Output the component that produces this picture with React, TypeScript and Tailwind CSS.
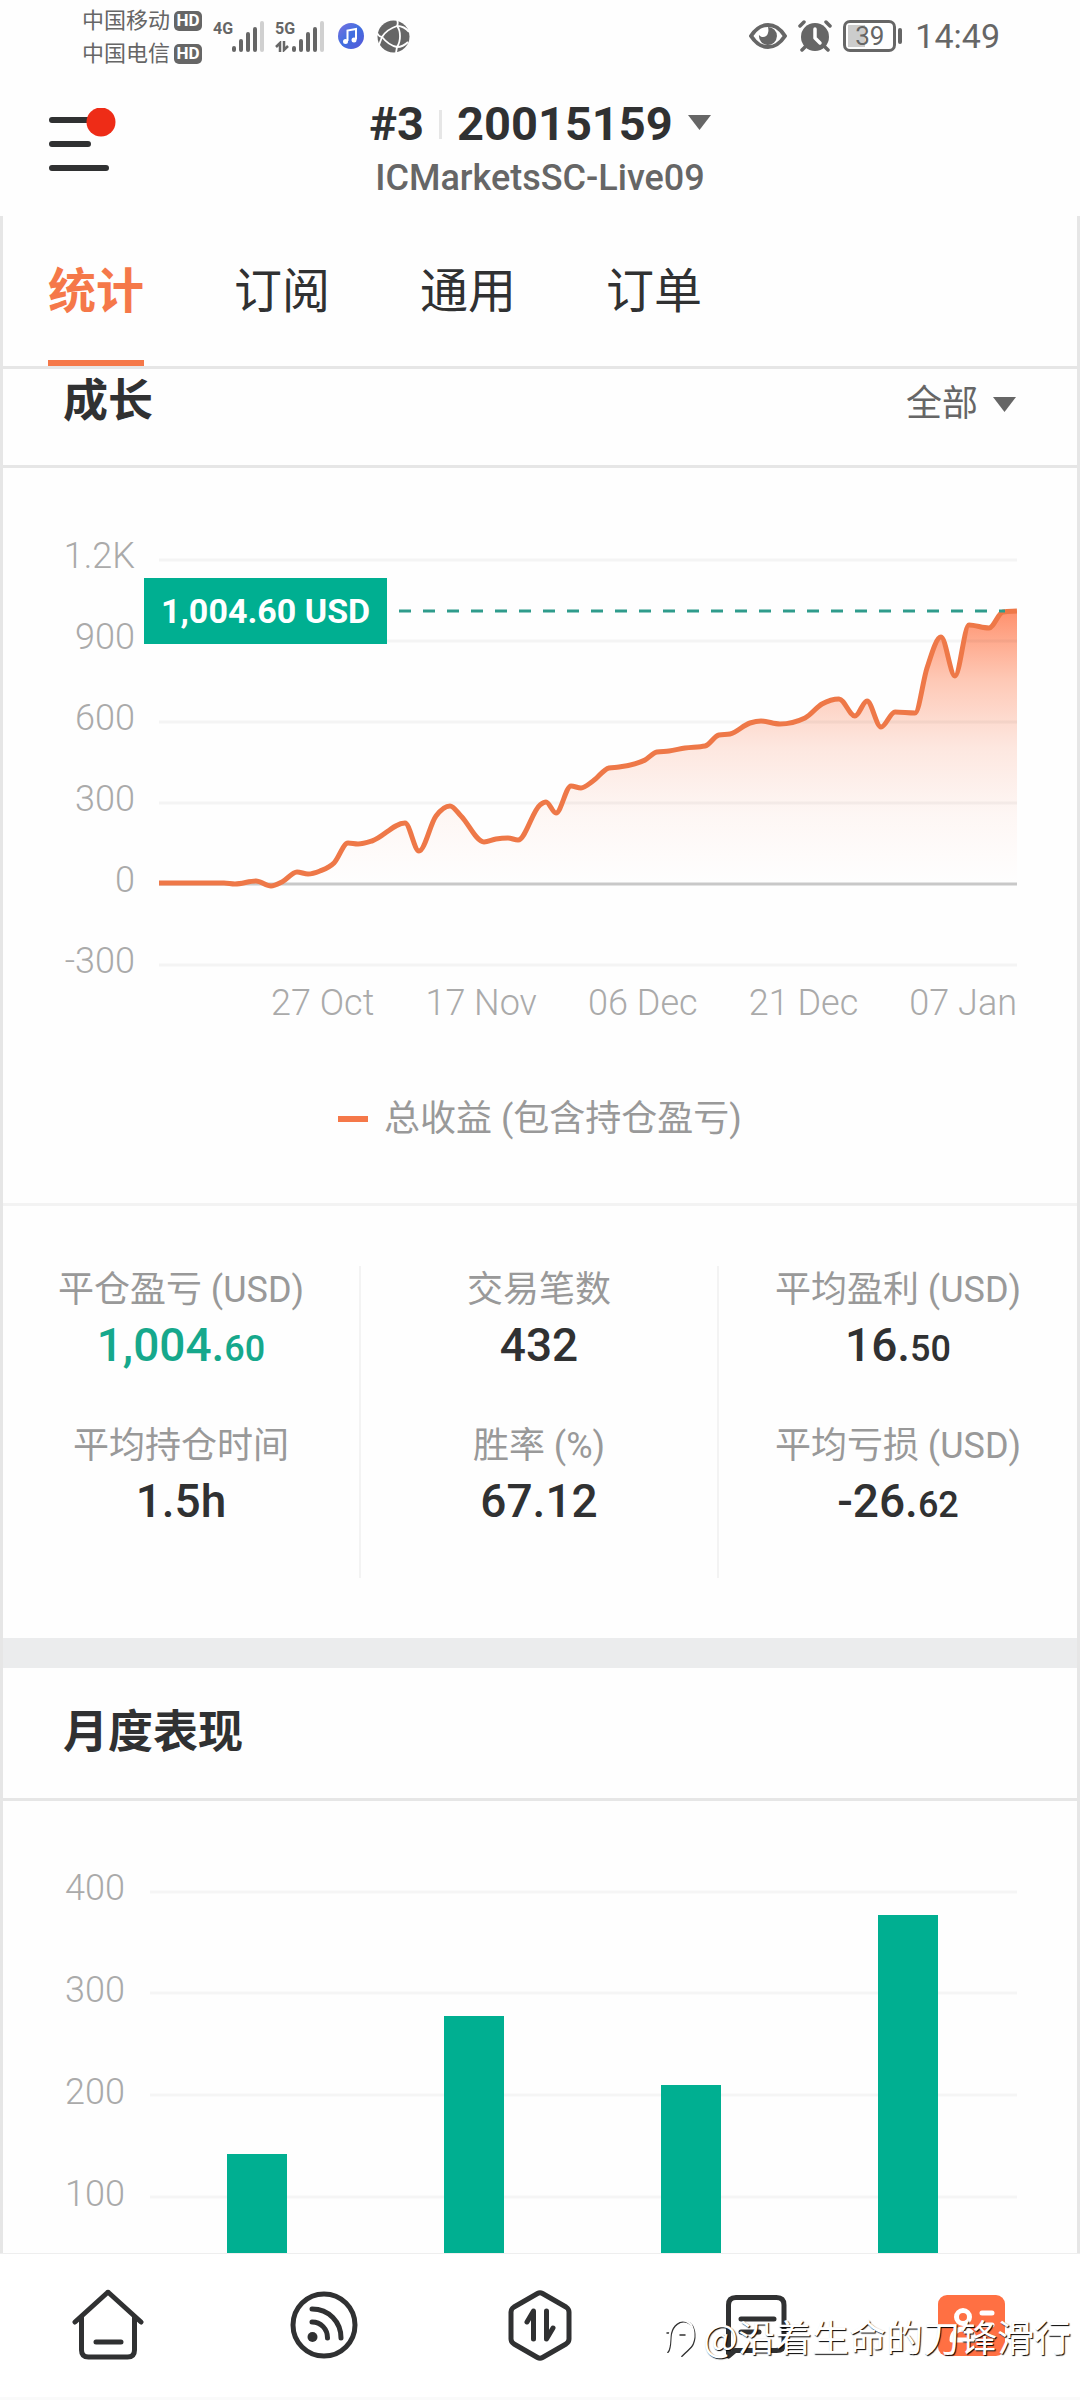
import { useState } from "react"
import type { ReactNode } from "react"

const tabs = ["统计", "订阅", "通用", "订单"]

const growthLabels = ["1.2K", "900", "600", "300", "0", "-300"]
const growthDates = ["27 Oct", "17 Nov", "06 Dec", "21 Dec", "07 Jan"]
const growthGrid = [22, 103, 184, 265, 427]

// points of the profit line inside the 858 x 441 plot
const growthPoints: [number, number][] = [
  [0, 345], [40, 345], [65, 345], [76, 346], [97, 343], [112, 348], [123, 344],
  [138, 334], [149, 336], [161, 333], [175, 325], [189, 305], [199, 306],
  [213, 303], [246, 285], [260, 313], [277, 278], [291, 268], [302, 278],
  [325, 304], [337, 301], [349, 300], [359, 302], [381, 267], [387, 264],
  [397, 275], [412, 248], [422, 250], [434, 243], [450, 230], [460, 229],
  [486, 222], [498, 214], [510, 213], [526, 210], [546, 208], [560, 197],
  [571, 196], [591, 185], [602, 183], [621, 186], [646, 180], [663, 166],
  [680, 161], [696, 178], [708, 163], [722, 189], [736, 174], [756, 175],
  [768, 130], [782, 99], [796, 138], [810, 87], [830, 90], [844, 74], [858, 73],
]

const monthLabels = ["400", "300", "200", "100"]
const monthGrid = [22, 123, 225, 327]
const monthBars = [
  { x: 77, top: 284 },
  { x: 294, top: 146 },
  { x: 511, top: 215 },
  { x: 728, top: 45 },
]

const stats = [
  [
    { label: "平仓盈亏 (USD)", value: "1,004.", small: "60", green: true },
    { label: "平均持仓时间", value: "1.5h" },
  ],
  [
    { label: "交易笔数", value: "432" },
    { label: "胜率 (%)", value: "67.12" },
  ],
  [
    { label: "平均盈利 (USD)", value: "16.", small: "50" },
    { label: "平均亏损 (USD)", value: "-26.", small: "62" },
  ],
]

// monotone cubic, so the line never overshoots a peak
function smoothPath(pts: [number, number][]) {
  const slope = (i: number) => (pts[i + 1][1] - pts[i][1]) / (pts[i + 1][0] - pts[i][0])
  const tangents = pts.map((_, i) => {
    if (i === 0) return slope(0)
    if (i === pts.length - 1) return slope(i - 1)
    const a = slope(i - 1)
    const b = slope(i)
    const ha = pts[i][0] - pts[i - 1][0]
    const hb = pts[i + 1][0] - pts[i][0]
    const p = (a * hb + b * ha) / (ha + hb)
    return (Math.sign(a) + Math.sign(b)) * Math.min(Math.abs(a), Math.abs(b), Math.abs(p) / 2)
  })
  let d = `M${pts[0][0]} ${pts[0][1]}`
  for (let i = 1; i < pts.length; i++) {
    const [x0, y0] = pts[i - 1]
    const [x1, y1] = pts[i]
    const h = (x1 - x0) / 3
    d += `C${x0 + h} ${y0 + tangents[i - 1] * h} ${x1 - h} ${y1 - tangents[i] * h} ${x1} ${y1}`
  }
  return d
}

function Caret() {
  return (
    <svg className="h-[15px] w-[23px]" viewBox="0 0 23 15" fill="#666">
      <path d="M0 0h23L11.500 15z" />
    </svg>
  )
}

function Signal() {
  return (
    <svg className="h-[31px] w-[32px]" viewBox="0 0 32 31" strokeWidth="4" strokeLinecap="round">
      <path d="M2 27v2M9 20v9M16 13v16M23 8v21" stroke="#666" />
      <path d="M30 2v27" stroke="#d0d0d0" />
    </svg>
  )
}

function StatusBar() {
  return (
    <div className="flex h-[72px] items-start justify-between pr-[80px] pl-[82px] text-[#666]">
      <div className="flex">
        <div className="pt-1">
          {["中国移动", "中国电信"].map((name) => (
            <div key={name} className="flex h-[33px] items-center gap-1 text-[22px]">
              <span>{name}</span>
              <span className="flex h-[20px] w-[28px] items-center justify-center rounded-[5px] bg-[#666] text-[17px] font-bold text-white">
                HD
              </span>
            </div>
          ))}
        </div>
        <div className="flex pt-[21px] pl-[11px]">
          <span className="w-[19px] text-[16px] leading-[15px] font-bold">4G</span>
          <Signal />
        </div>
        <div className="flex pt-[21px] pl-[11px]">
          <div className="w-[17px]">
            <div className="text-[16px] leading-[15px] font-bold">5G</div>
            <svg className="mt-[5px] h-[11px] w-[15px]" viewBox="0 0 15 11" fill="none" stroke="#666" strokeWidth="2.500">
              <path d="M1 6l4-4v9M9 0v9l4-4" />
            </svg>
          </div>
          <Signal />
        </div>
        <svg className="mt-[22px] ml-[13px] h-[28px] w-[28px]" viewBox="0 0 28 28">
          <defs>
            <linearGradient id="music" x1="0" y1="0" x2="1" y2="1">
              <stop offset="0" stopColor="#7a6fe0" />
              <stop offset="0.500" stopColor="#3f6fe0" />
              <stop offset="1" stopColor="#5a55d8" />
            </linearGradient>
          </defs>
          <circle cx="14" cy="14" r="13" fill="url(#music)" />
          <path d="M10.500 19V8.500L19 7v10.500" fill="none" stroke="#fff" strokeWidth="2" />
          <circle cx="8.500" cy="19.500" r="2.500" fill="#fff" />
          <circle cx="17" cy="18" r="2.500" fill="#fff" />
        </svg>
        <svg className="mt-[20px] ml-[12px] h-[33px] w-[33px]" viewBox="0 0 33 33">
          <circle cx="16.500" cy="16.500" r="16" fill="#666" />
          <g fill="none" stroke="#fff" strokeWidth="1.800">
            <path d="M20 0c1 2 1 4 0 6C14 8 8 12 5 17c-2 0-4-2-5-4" />
            <path d="M20 6c4 5 4 15 0 21-5-1-11-5-15-10" />
            <path d="M20 6c4 0 9 2 12 6M20 27c4 0 8-2 11-5M20 27l-1 6M5 17l-3 8" />
          </g>
        </svg>
      </div>

      <div className="flex h-[72px] items-center">
        <svg className="h-[28px] w-[40px]" viewBox="0 0 40 28">
          <path d="M3 14C9 5 14 3 20 3s11 2 17 11c-6 9-11 11-17 11S9 23 3 14z" fill="none" stroke="#666" strokeWidth="4" strokeLinejoin="round" />
          <path d="M20 5a9 9 0 1 1-9 8c2 3 8 3 9-2 1-3 0-5-0-6z" fill="#666" />
        </svg>
        <svg className="ml-[10px] h-[32px] w-[34px]" viewBox="0 0 34 32" strokeLinecap="round">
          <circle cx="17" cy="17" r="14" fill="#666" />
          <path d="M2 6l4-4M32 6l-4-4M7 27l-3 3M27 27l3 3" stroke="#666" strokeWidth="3.500" />
          <path d="M17 9v9l5 5" fill="none" stroke="#fff" strokeWidth="3.500" strokeLinejoin="round" />
        </svg>
        <div className="ml-[11px] flex h-[32px] w-[53px] items-center justify-center rounded-[7px] border-3 border-[#666] p-[2px]">
          <span className="h-full w-full bg-linear-to-r from-[#ccc] from-40% to-transparent to-40% text-center text-[26px] leading-[23px]">
            39
          </span>
        </div>
        <div className="ml-[2px] h-[16px] w-[4px] rounded-full bg-[#666]" />
        <span className="ml-[13px] text-[34px]">14:49</span>
      </div>
    </div>
  )
}

function Header() {
  return (
    <header className="grid h-[144px] grid-cols-[1fr_auto_1fr] items-start pt-6">
      <button aria-label="菜单" className="mt-3 ml-12 w-[68px]">
        <svg className="h-[64px] w-[68px]" viewBox="0 0 68 64">
          <path d="M4 12h40M4 36h36M4 60h54" stroke="#303132" strokeWidth="6" strokeLinecap="round" />
          <circle cx="53" cy="14" r="14.500" fill="#ee2c17" />
        </svg>
      </button>
      <div className="flex flex-col items-center">
        <button className="flex h-[56px] items-center text-[47px] font-bold text-[#303132]">
          #3
          <span className="mx-[15px] h-[29px] w-[3px] bg-[#e6e6e6]" />
          20015159
          <span className="ml-[15px] pb-1"><Caret /></span>
        </button>
        <div className="mt-1 text-[36px] leading-[44px] font-medium text-[#666]">ICMarketsSC-Live09</div>
      </div>
    </header>
  )
}

function GrowthChart() {
  const line = smoothPath(growthPoints)
  return (
    <div className="pt-[70px] pr-[60px] text-[36px] leading-[36px] font-light text-[#aaa]">
      <div className="relative flex">
        <div className="flex w-[156px] flex-col gap-[45px] pr-[24px] text-right">
          {growthLabels.map((l) => (
            <span key={l}>{l}</span>
          ))}
        </div>
        <svg className="h-[441px] flex-1" viewBox="0 0 858 441" preserveAspectRatio="none" fill="none">
          <defs>
            <linearGradient id="profit" gradientUnits="userSpaceOnUse" x1="0" y1="73" x2="0" y2="346">
              <stop offset="0" stopColor="#ff6c3c" stopOpacity="0.750" />
              <stop offset="0.250" stopColor="#ff7d50" stopOpacity="0.420" />
              <stop offset="0.500" stopColor="#f98a65" stopOpacity="0.200" />
              <stop offset="0.750" stopColor="#fa9674" stopOpacity="0.070" />
              <stop offset="1" stopColor="#ff9c7c" stopOpacity="0" />
            </linearGradient>
          </defs>
          <path d={`${line}V346H0z`} fill="url(#profit)" />
          {growthGrid.map((y) => (
            <path key={y} d={`M0 ${y}H858`} stroke="#000" strokeOpacity="0.040" strokeWidth="3" />
          ))}
          <path d="M0 346H858" stroke="#c8c8c8" strokeWidth="3" />
          <path d={line} stroke="#ee7848" strokeWidth="5" strokeLinejoin="round" />
          <path d="M240 73H846" stroke="#2f9c8c" strokeWidth="3" strokeDasharray="12 12" />
        </svg>
        <div className="absolute top-[40px] left-[141px] bg-[#00af91] px-[17px] py-[15px] text-[34px] leading-[36px] font-bold text-white">
          1,004.60 USD
        </div>
      </div>
      <div className="mt-[6px] flex justify-between pl-[268px]">
        {growthDates.map((d) => (
          <span key={d}>{d}</span>
        ))}
      </div>
      <div className="mt-[80px] flex items-center justify-center gap-4 pb-[66px] pl-[60px] font-normal text-[#999]">
        <span className="h-[6px] w-[30px] bg-[#f57849]" />
        总收益 (包含持仓盈亏)
      </div>
    </div>
  )
}

function Stats() {
  return (
    <div className="grid grid-cols-3 divide-x-2 divide-[#f3f3f3] border-t-3 border-[#f3f3f3] py-[60px] text-center">
      {stats.map((col, i) => (
        <dl key={i}>
          {col.map((s) => (
            <div key={s.label} className="pb-[46px]">
              <dt className="text-[36px] leading-[48px] text-[#999]">{s.label}</dt>
              <dd className={`text-[46px] leading-[62px] font-medium ${s.green ? "text-[#16a88c]" : "text-[#303132]"}`}>
                {s.value}
                {s.small && <span className="text-[36px] leading-none">{s.small}</span>}
              </dd>
            </div>
          ))}
        </dl>
      ))}
    </div>
  )
}

function MonthChart() {
  return (
    <div className="flex pt-[69px] pr-[60px] text-[36px] leading-[36px] font-light text-[#aaa]">
      <div className="flex w-[147px] flex-col gap-[66px] pr-[25px] text-right">
        {monthLabels.map((l) => (
          <span key={l}>{l}</span>
        ))}
      </div>
      <svg className="h-[383px] flex-1" viewBox="0 0 867 383" preserveAspectRatio="none">
        {monthGrid.map((y) => (
          <path key={y} d={`M0 ${y}H867`} stroke="#f5f5f5" strokeWidth="3" />
        ))}
        {monthBars.map((b) => (
          <rect key={b.x} x={b.x} y={b.top} width="60" height={383 - b.top} fill="#00af91" />
        ))}
      </svg>
    </div>
  )
}

function NavIcon({ label, children }: { label: string; children: ReactNode }) {
  return (
    <button aria-label={label} className="flex justify-center">
      <svg
        className="h-[72px] w-[72px]"
        viewBox="0 0 72 72"
        fill="none"
        stroke="#303132"
        strokeWidth="5"
        strokeLinecap="round"
        strokeLinejoin="round"
      >
        {children}
      </svg>
    </button>
  )
}

function BottomNav() {
  return (
    <nav className="relative grid grid-cols-5 border-t border-b-3 border-t-[#eee] border-b-[#fafafa] bg-white pt-[35px] pb-[36px]">
      <NavIcon label="首页">
        <path d="M3 33L35 4q1-1 2 0l32 29" />
        <path d="M9.500 28v33q0 7 7 7h39q7 0 7-7V28M24 53h25" />
      </NavIcon>
      <NavIcon label="动态">
        <circle cx="36" cy="36" r="31" />
        <circle cx="24.500" cy="48" r="5" fill="#303132" stroke="none" />
        <path d="M24 33c9 0 15.500 7 15.500 16M24 20c17 0 29 13 29 29" />
      </NavIcon>
      <NavIcon label="交易">
        <path d="M33.500 4.500q2.500-1.500 5 0L62 18q3 2 3 5v27q0 3-3 5L38.500 68.500q-2.500 1.500-5 0L10 55q-3-2-3-5V23q0-3 3-5z" />
        <path d="M23 33l6.500-11v28M42.500 22v28L49 39" />
      </NavIcon>
      <NavIcon label="消息">
        <path d="M8.500 67V16q0-7.500 7.500-7.500h40.500q7.500 0 7.500 7.500v38q0 7.500-7.500 7.500H15z" />
        <path d="M21 30h33M21 43h18" />
      </NavIcon>
      <NavIcon label="我的">
        <rect x="2" y="6" width="67" height="61" rx="9" fill="#ff7043" stroke="none" />
        <g stroke="#fff">
          <circle cx="27" cy="28" r="6.500" />
          <path d="M16 51c0-7 5-11 11-11s11 4 11 11zM46 24h10M46 36h10" />
        </g>
      </NavIcon>
      <div className="pointer-events-none absolute top-[55px] right-[9px] flex items-center gap-1 font-['Noto_Sans_CJK_SC',sans-serif] text-[37px] leading-[54px] text-white [text-shadow:1px_1px_1px_#000]">
        <svg className="h-[44px] w-[34px] overflow-visible" viewBox="0 0 34 44" fill="none" strokeLinecap="round">
          <path d="M3 38c3-4 2-12 3-18 2-9 9-14 16-12 8 3 9 14 6 22-2 5-7 7-11 12" stroke="#333" strokeWidth="2" />
          <path d="M2 19h4M15 21h5" stroke="#333" strokeWidth="1.500" />
          <path d="M2 37c3-4 2-12 3-18 2-9 9-14 16-12 8 3 9 14 6 22-2 5-7 7-11 12" stroke="#fff" strokeWidth="2" />
        </svg>
        <span>@沿着生命的刀锋滑行</span>
      </div>
    </nav>
  )
}

function App() {
  const [active, setActive] = useState("统计")

  return (
    <div className="flex min-h-screen flex-col bg-[#fefefe] font-[Roboto,'Noto_Sans_CJK_SC',sans-serif]">
      <StatusBar />
      <Header />

      <main className="flex-1 border-x-3 border-[#e6e6e6]">
        {/* Tabs */}
        <div role="tablist" className="flex gap-[90px] border-b-3 border-[#e6e6e6] pl-[45px]">
          {tabs.map((t) => (
            <button
              key={t}
              role="tab"
              aria-selected={t === active}
              onClick={() => setActive(t)}
              className={`h-[150px] border-b-6 pt-2 text-[48px] ${
                t === active ? "border-[#f57849] font-bold text-[#f57849]" : "border-transparent text-[#303132]"
              }`}
            >
              {t}
            </button>
          ))}
        </div>

        {/* Growth */}
        <section>
          <div className="flex h-[99px] items-start justify-between border-b-3 border-[#e6e6e6] pt-[9px] pr-[61px] pl-[60px]">
            <h2 className="text-[45px] leading-[48px] font-bold text-[#303132]">成长</h2>
            <label className="flex items-center gap-[14px] text-[#666]">
              <select aria-label="时间范围" className="appearance-none text-[36px] leading-[52px]">
                <option>全部</option>
              </select>
              <Caret />
            </label>
          </div>
          <GrowthChart />
          <Stats />
        </section>

        <div className="h-[30px] bg-[#ebeced]" />

        {/* Monthly */}
        <section>
          <h2 className="flex h-[133px] items-center border-b-3 border-[#e6e6e6] pl-[60px] text-[45px] font-bold text-[#303132]">
            月度表现
          </h2>
          <MonthChart />
        </section>
      </main>

      <BottomNav />
    </div>
  )
}

export default App
